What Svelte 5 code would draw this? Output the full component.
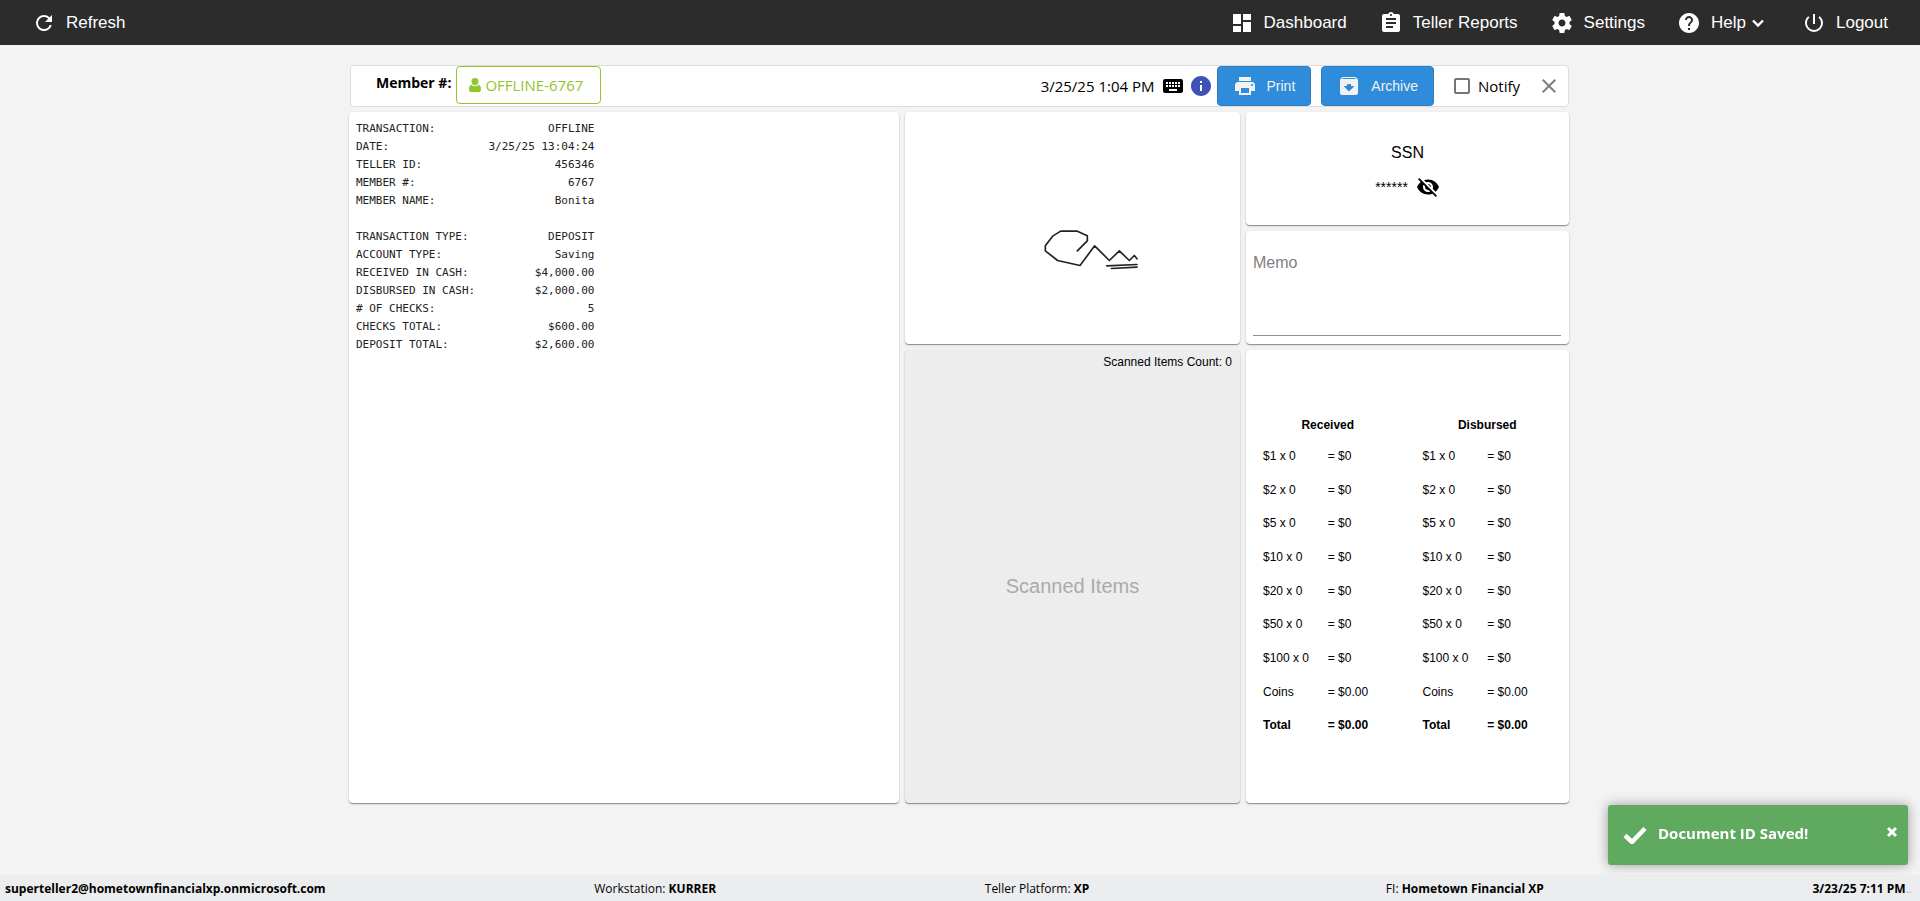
<script>
  const receipt = [
    ['TRANSACTION:', 'OFFLINE'],
    ['DATE:', '3/25/25 13:04:24'],
    ['TELLER ID:', '456346'],
    ['MEMBER #:', '6767'],
    ['MEMBER NAME:', 'Bonita'],
    null,
    ['TRANSACTION TYPE:', 'DEPOSIT'],
    ['ACCOUNT TYPE:', 'Saving'],
    ['RECEIVED IN CASH:', '$4,000.00'],
    ['DISBURSED IN CASH:', '$2,000.00'],
    ['# OF CHECKS:', '5'],
    ['CHECKS TOTAL:', '$600.00'],
    ['DEPOSIT TOTAL:', '$2,600.00']
  ];
  // Receipt printer lines are 36 characters wide.
  const receiptText = receipt
    .map((row) => (row ? row[0] + row[1].padStart(36 - row[0].length) : ''))
    .join('\n');

  const cash = [
    ['$1 x 0', '= $0'],
    ['$2 x 0', '= $0'],
    ['$5 x 0', '= $0'],
    ['$10 x 0', '= $0'],
    ['$20 x 0', '= $0'],
    ['$50 x 0', '= $0'],
    ['$100 x 0', '= $0'],
    ['Coins', '= $0.00'],
    ['Total', '= $0.00']
  ];

  const icons = {
    refresh: 'M17.65 6.35A7.958 7.958 0 0 0 12 4a8 8 0 1 0 7.73 10h-2.08A5.99 5.99 0 0 1 12 18c-3.31 0-6-2.69-6-6s2.69-6 6-6c1.66 0 3.14.69 4.22 1.78L13 11h7V4l-2.35 2.35z',
    dashboard: 'M3 13h8V3H3v10zm0 8h8v-6H3v6zm10 0h8V11h-8v10zm0-18v6h8V3h-8z',
    reports: 'M19 3h-4.18C14.4 1.84 13.3 1 12 1s-2.4.84-2.82 2H5c-1.1 0-2 .9-2 2v14c0 1.1.9 2 2 2h14c1.1 0 2-.9 2-2V5c0-1.1-.9-2-2-2zm-7 0c.55 0 1 .45 1 1s-.45 1-1 1-1-.45-1-1 .45-1 1-1zm2 14H7v-2h7v2zm3-4H7v-2h10v2zm0-4H7V7h10v2z',
    settings: 'M19.43 12.98c.04-.32.07-.64.07-.98s-.03-.66-.07-.98l2.11-1.65c.19-.15.24-.42.12-.64l-2-3.46c-.12-.22-.39-.3-.61-.22l-2.49 1c-.52-.4-1.08-.73-1.69-.98l-.38-2.65A.488.488 0 0 0 14 2h-4c-.25 0-.46.18-.49.42l-.38 2.65c-.61.25-1.17.59-1.69.98l-2.49-1c-.23-.09-.49 0-.61.22l-2 3.46c-.13.22-.07.49.12.64l2.11 1.65c-.04.32-.07.65-.07.98s.03.66.07.98l-2.11 1.65c-.19.15-.24.42-.12.64l2 3.46c.12.22.39.3.61.22l2.49-1c.52.4 1.08.73 1.69.98l.38 2.65c.03.24.24.42.49.42h4c.25 0 .46-.18.49-.42l.38-2.65c.61-.25 1.17-.59 1.69-.98l2.49 1c.23.09.49 0 .61-.22l2-3.46c.12-.22.07-.49-.12-.64l-2.11-1.65zM12 15.5c-1.93 0-3.5-1.57-3.5-3.5s1.57-3.5 3.5-3.5 3.5 1.57 3.5 3.5-1.57 3.5-3.5 3.5z',
    help: 'M12 2C6.48 2 2 6.48 2 12s4.48 10 10 10 10-4.48 10-10S17.52 2 12 2zm1 17h-2v-2h2v2zm2.07-7.75l-.9.92C13.45 12.9 13 13.5 13 15h-2v-.5c0-1.1.45-2.1 1.17-2.83l1.24-1.26c.37-.36.59-.86.59-1.41 0-1.1-.9-2-2-2s-2 .9-2 2H8c0-2.21 1.79-4 4-4s4 1.79 4 4c0 .88-.36 1.68-.93 2.25z',
    power: 'M13 3h-2v10h2V3zm4.83 2.17l-1.42 1.42A6.92 6.92 0 0 1 19 12c0 3.87-3.13 7-7 7s-7-3.13-7-7c0-2.19 1.01-4.14 2.58-5.42L6.17 5.17A8.932 8.932 0 0 0 3 12a9 9 0 0 0 18 0c0-2.74-1.23-5.18-3.17-6.83z',
    keyboard: 'M20 5H4c-1.1 0-1.99.9-1.99 2L2 17c0 1.1.9 2 2 2h16c1.1 0 2-.9 2-2V7c0-1.1-.9-2-2-2zm-9 3h2v2h-2V8zm0 3h2v2h-2v-2zM8 8h2v2H8V8zm0 3h2v2H8v-2zm-1 2H5v-2h2v2zm0-3H5V8h2v2zm9 7H8v-2h8v2zm0-4h-2v-2h2v2zm0-3h-2V8h2v2zm3 3h-2v-2h2v2zm0-3h-2V8h2v2z',
    info: 'M12 2C6.48 2 2 6.48 2 12s4.48 10 10 10 10-4.48 10-10S17.52 2 12 2zm1 15h-2v-6h2v6zm0-8h-2V7h2v2z',
    print: 'M19 8H5c-1.66 0-3 1.34-3 3v6h4v4h12v-4h4v-6c0-1.66-1.34-3-3-3zm-3 11H8v-5h8v5zm3-7c-.55 0-1-.45-1-1s.45-1 1-1 1 .45 1 1-.45 1-1 1zm-1-9H6v4h12V3z',
    archive: 'M20.54 5.23l-1.39-1.68C18.88 3.21 18.47 3 18 3H6c-.47 0-.88.21-1.16.55L3.46 5.23C3.17 5.57 3 6.02 3 6.5V19c0 1.1.9 2 2 2h14c1.1 0 2-.9 2-2V6.5c0-.48-.17-.93-.46-1.27zM12 17.5L6.5 12H10v-2h4v2h3.5L12 17.5zM5.12 5l.81-1h12l.94 1H5.12z',
    close: 'M19 6.41L17.59 5 12 10.59 6.41 5 5 6.41 10.59 12 5 17.59 6.41 19 12 13.41 17.59 19 19 17.59 13.41 12z',
    eyeOff: 'M12 7c2.76 0 5 2.24 5 5 0 .65-.13 1.26-.36 1.83l2.92 2.92c1.51-1.26 2.7-2.89 3.43-4.75-1.73-4.39-6-7.5-11-7.5-1.4 0-2.74.25-3.98.7l2.16 2.16C10.74 7.13 11.35 7 12 7zM2 4.27l2.28 2.28.46.46A11.804 11.804 0 0 0 1 12c1.73 4.39 6 7.5 11 7.5 1.55 0 3.03-.3 4.38-.84l.42.42L19.73 22 21 20.73 3.27 3 2 4.27zM7.53 9.8l1.55 1.55c-.05.21-.08.43-.08.65 0 1.66 1.34 3 3 3 .22 0 .44-.03.65-.08l1.55 1.55c-.67.33-1.41.53-2.2.53-2.76 0-5-2.24-5-5 0-.79.2-1.53.53-2.2zm4.31-.78l3.15 3.15.02-.16c0-1.66-1.34-3-3-3l-.17.01z'
  };

  let notify = $state(false);
  let memo = $state('');
  let toastOpen = $state(true);
</script>

{#snippet icon(name)}
  <svg class="icon" viewBox="0 0 24 24" aria-hidden="true"><path d={icons[name]} /></svg>
{/snippet}

<div class="page">
  <header class="topbar">
    <button class="nav">{@render icon('refresh')}Refresh</button>
    <nav class="menu">
      <a class="nav" href="#dashboard">{@render icon('dashboard')}Dashboard</a>
      <a class="nav" href="#reports">{@render icon('reports')}Teller Reports</a>
      <a class="nav" href="#settings">{@render icon('settings')}Settings</a>
      <button class="nav">
        {@render icon('help')}
        <span class="help">
          Help
          <svg class="chevron" viewBox="0 0 16 16" aria-hidden="true"><path d="M3 5.500l5 5 5-5" /></svg>
        </span>
      </button>
      <button class="nav">{@render icon('power')}Logout</button>
    </nav>
  </header>

  <main>
    <section class="toolbar">
      <strong class="member-label">Member #:</strong>
      <button class="member">
        <svg class="person" viewBox="0 0 12 14" aria-hidden="true"
          ><path d="M6 0a3.500 3.500 0 0 1 3.500 3.600C9.500 5.800 8 7.400 6 7.400S2.500 5.800 2.500 3.600A3.500 3.500 0 0 1 6 0zM2.700 6.700C3.600 7.700 4.700 8.200 6 8.200s2.400-.5 3.300-1.500C11.400 6.900 12 9 12 11.400 12 13 11 14 9.700 14H2.300C1 14 0 13 0 11.400 0 9 .6 6.900 2.700 6.700z" /></svg>
        OFFLINE-6767
      </button>
      <div class="actions">
        <time>3/25/25 1:04 PM</time>
        <span class="marks">
          {@render icon('keyboard')}
          <span class="info">{@render icon('info')}</span>
        </span>
        <button class="primary">{@render icon('print')}Print</button>
        <button class="primary archive">{@render icon('archive')}Archive</button>
        <label class="notify"><input type="checkbox" bind:checked={notify} />Notify</label>
        <button class="close" aria-label="Close">{@render icon('close')}</button>
      </div>
    </section>

    <div class="board">
      <section class="card receipt"><pre>{receiptText}</pre></section>

      <section class="card signature">
        <svg viewBox="-285 -264 1005 696" role="img" aria-label="Signature">
          <path d="M232 152L262 122V107L232 93H182L158 108L136 137V152L173 181L240 196L284 137L328 181L358 152L388 181L403 166L411 176M320 197L411 193M334 205L411 201" />
        </svg>
      </section>

      <section class="card scanned">
        <div class="count">Scanned Items Count: 0</div>
        <div class="empty">Scanned Items</div>
      </section>

      <section class="card ssn">
        <div>SSN</div>
        <div class="masked">
          <span>******</span>
          <button aria-label="Show SSN">{@render icon('eyeOff')}</button>
        </div>
      </section>

      <section class="card memo">
        <textarea placeholder="Memo" aria-label="Memo" bind:value={memo}></textarea>
      </section>

      <section class="card cash">
        {#each ['Received', 'Disbursed'] as title}
          <table>
            <thead><tr><th colspan="2">{title}</th></tr></thead>
            <tbody>
              {#each cash as [label, amount]}
                <tr class:total={label === 'Total'}><td>{label}</td><td>{amount}</td></tr>
              {/each}
            </tbody>
          </table>
        {/each}
      </section>
    </div>
  </main>

  <footer>
    <b>superteller2@hometownfinancialxp.onmicrosoft.com</b>
    <span>Workstation: <b>KURRER</b></span>
    <span class="platform">Teller Platform: <b>XP</b></span>
    <span>FI: <b>Hometown Financial XP</b></span>
    <span><b>3/23/25 7:11 PM</b><span class="dots">..</span></span>
  </footer>

  {#if toastOpen}
    <div class="toast" role="status">
      <svg class="tick" viewBox="0 0 24 18" aria-hidden="true"><path d="M2 9.500L9 16L22 2.500" /></svg>
      <b>Document ID Saved!</b>
      <button aria-label="Dismiss" onclick={() => (toastOpen = false)}>
        <svg viewBox="0 0 12 12" aria-hidden="true"><path d="M2 2L10 10M10 2L2 10" /></svg>
      </button>
    </div>
  {/if}
</div>

<style>
  .page {
    --ui: 'Open Sans', 'Noto Sans', sans-serif;
    box-sizing: border-box;
    min-height: 100vh;
    display: flex;
    flex-direction: column;
    background: #f3f3f3;
    color: #000;
    font: 16px/20px 'Liberation Sans', Arial, sans-serif;
  }

  button,
  textarea {
    font: inherit;
    color: inherit;
    border: 0;
    padding: 0;
    margin: 0;
    background: none;
  }

  button {
    cursor: pointer;
  }

  .icon {
    display: block;
    width: 24px;
    height: 24px;
    fill: currentColor;
    flex: none;
  }

  .topbar {
    display: flex;
    justify-content: space-between;
    height: 45px;
    padding: 0 16px;
    background: #2c2c2c;
    color: #fff;
    font-size: 17px;
  }

  .menu {
    display: flex;
  }

  .nav {
    display: flex;
    align-items: center;
    gap: 10px;
    padding: 0 16px;
    color: #fff;
    text-decoration: none;
  }

  .help {
    display: flex;
    align-items: center;
    gap: 4px;
    padding-right: 4px;
  }

  .chevron {
    width: 16px;
    height: 16px;
    fill: none;
    stroke: #fff;
    stroke-width: 2.4;
  }

  main {
    flex: 1;
    display: flex;
    flex-direction: column;
    gap: 5px;
    box-sizing: border-box;
    width: 100%;
    max-width: 1222px;
    margin: 0 auto;
    padding: 20px 2px 72px 0;
  }

  .toolbar {
    display: flex;
    align-items: flex-start;
    border: 1px solid #ddd;
    border-radius: 4px;
    background: #fff;
    margin-left: 1px;
    font-family: var(--ui);
  }

  .member-label {
    padding: 7px 5px 0 25px;
    font-size: 14px;
  }

  .member {
    display: flex;
    align-items: center;
    gap: 4px;
    height: 38px;
    padding: 0 17px 0 12px;
    border: 1px solid #93c52c;
    border-radius: 4px;
    color: #93c52c;
    font-size: 15px;
  }

  .person {
    width: 12px;
    height: 14px;
    fill: #93c52c;
  }

  .actions {
    display: flex;
    align-items: center;
    height: 40px;
    margin-left: auto;
    font-size: 15px;
  }

  .marks {
    display: flex;
    gap: 4px;
    margin: 0 4px 0 6px;
  }

  .info {
    color: #3f51b5;
  }

  .primary {
    display: flex;
    align-items: center;
    gap: 10px;
    box-sizing: border-box;
    height: 40px;
    padding: 0 15px;
    border: 1px solid #2a7dc4;
    border-radius: 4px;
    background: #2f8cdb;
    color: #f2f2f2;
    font: 14px/20px 'Liberation Sans', Arial, sans-serif;
  }

  .archive {
    margin-left: 10px;
  }

  .notify {
    display: flex;
    align-items: center;
    gap: 8px;
    margin: 0 17px 0 20px;
  }

  .notify input {
    appearance: none;
    width: 16px;
    height: 16px;
    margin: 0;
    border: 2px solid #757575;
    border-radius: 2px;
  }

  .notify input:checked {
    background: #3f51b5;
  }

  .close {
    margin-right: 7px;
    color: #808080;
  }

  .board {
    flex: 1;
    display: grid;
    grid-template-columns: 550fr 335fr 323fr;
    grid-template-rows: 1fr 1fr 4fr;
    gap: 6px;
  }

  .card {
    min-width: 0;
    border-radius: 4px;
    background: #fff;
    box-shadow: 0 1px 1px rgba(0, 0, 0, 0.38), 0 1px 3px rgba(0, 0, 0, 0.1);
  }

  .receipt {
    grid-row: 1 / 4;
    padding: 8px 7px;
  }

  .receipt pre {
    margin: 0;
    color: #222;
    font: 11px/18px 'DejaVu Sans Mono', monospace;
  }

  .signature {
    grid-column: 2;
    grid-row: 1 / 3;
    position: relative;
  }

  .signature svg {
    position: absolute;
    inset: 0;
    width: 100%;
    height: 100%;
    fill: none;
    stroke: #222;
    stroke-width: 5;
    stroke-linecap: round;
    stroke-linejoin: round;
  }

  .scanned {
    grid-column: 2;
    grid-row: 3;
    display: flex;
    flex-direction: column;
    background: #ededed;
  }

  .count {
    padding: 2px 8px 0;
    text-align: right;
    font-size: 12px;
  }

  .empty {
    flex: 1;
    display: flex;
    align-items: center;
    justify-content: center;
    padding-bottom: 4px;
    color: #aaa;
    font-size: 20px;
  }

  .ssn {
    grid-column: 3;
    grid-row: 1;
    display: flex;
    flex-direction: column;
    align-items: center;
    justify-content: center;
    gap: 12px;
    padding-top: 4px;
  }

  .masked {
    display: flex;
    align-items: center;
    gap: 8px;
    font-size: 14px;
  }

  .memo {
    grid-column: 3;
    grid-row: 2;
    display: flex;
    padding: 22px 8px 8px 7px;
  }

  .memo textarea {
    flex: 1;
    min-width: 0;
    resize: none;
    outline: none;
    border-bottom: 1px solid #8f8f8f;
  }

  .memo textarea::placeholder {
    color: #808080;
    opacity: 1;
  }

  .cash {
    grid-column: 3;
    grid-row: 3;
    display: grid;
    grid-template-columns: 1fr 1fr;
    align-items: center;
    gap: 30px;
    padding: 0 17px;
    font-size: 12px;
  }

  .cash table {
    width: 100%;
    height: 331px;
    table-layout: fixed;
    border-collapse: collapse;
  }

  .cash thead tr {
    height: 28px;
  }

  .cash th,
  .cash td {
    padding: 0;
    line-height: 16px;
    white-space: nowrap;
  }

  .total {
    font-weight: bold;
  }

  footer {
    box-sizing: border-box;
    display: flex;
    align-items: center;
    justify-content: space-between;
    height: 26px;
    padding: 2px 8px 0 5px;
    background: #ecedef;
    font: 12px/16px var(--ui);
  }

  .platform {
    padding-right: 28px;
  }

  .dots {
    color: #bbb;
  }

  .toast {
    position: fixed;
    right: 12px;
    bottom: 36px;
    box-sizing: border-box;
    width: 300px;
    height: 60px;
    display: flex;
    align-items: flex-start;
    padding: 18px 10px 0 15px;
    border-radius: 3px;
    background: #60aa60;
    box-shadow: 0 0 12px #999;
    color: #fff;
    font: 15px/20px var(--ui);
  }

  .toast svg {
    display: block;
    fill: none;
    stroke: #fff;
  }

  .tick {
    width: 24px;
    height: 18px;
    margin: 3px 11px 0 0;
    stroke-width: 4.5;
  }

  .toast button {
    margin: 3px 0 0 auto;
  }

  .toast button svg {
    width: 12px;
    height: 12px;
    stroke-width: 3;
  }
</style>
